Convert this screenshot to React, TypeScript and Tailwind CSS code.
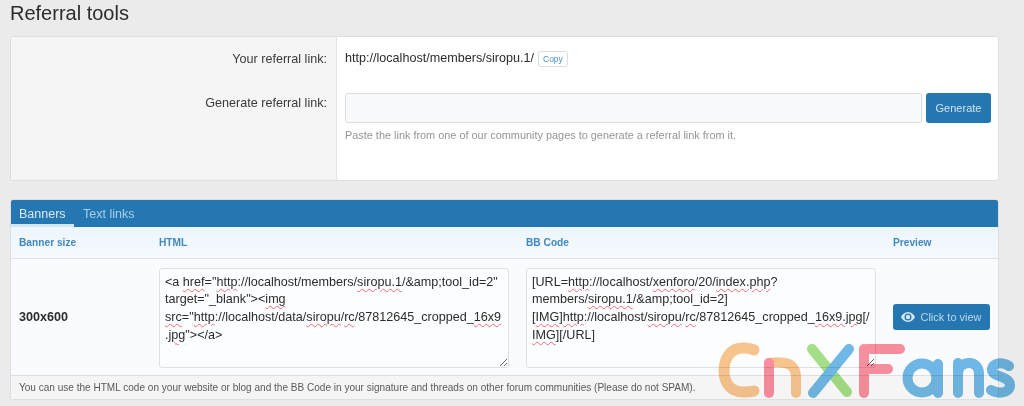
import React from 'react';

function Sq({ children }: { children: React.ReactNode }) {
  return <span className="underline decoration-wavy decoration-[#ee6a72] decoration-[1px] underline-offset-[2px]">{children}</span>;
}

function CnXFansLogo() {
  return (
    <svg className="absolute left-[700px] top-[330px] pointer-events-none" width="324" height="76" viewBox="0 0 324 76" fill="none" strokeLinecap="round" strokeLinejoin="round" strokeWidth="10">
      <g className="mix-blend-multiply">
        <path d="M54 20 C50 18 46 18 43 18 C30 18 24 29 24 41 C24 53 31 62 43 62 C47 62 51 62 54 61" stroke="#fac68e" strokeWidth="11" />
        <path d="M69 33 C74 32 80 32 85 33 C92 34 96 39 96 47 L96 63" stroke="#fac68e" />
        <path d="M69 33 L69 63" stroke="#fc8f9e" />
        <path d="M112 19 L147 62" stroke="#a6e086" />
        <path d="M149 19 L113 63" stroke="#70b9e6" />
        <path d="M164 19 L164 63" stroke="#fc8f9e" />
        <path d="M168 19 L200 19" stroke="#fc8f9e" />
        <path d="M164 39 L188 39" stroke="#fc8f9e" />
        <circle cx="222" cy="48" r="14.5" stroke="#70b9e6" />
        <path d="M238 34 L238 63" stroke="#70b9e6" />
        <path d="M258 33 L258 63 M258 44 C258 36 264 33 269 33 C275 33 279 37 279 44 L279 63" stroke="#70b9e6" />
        <path d="M309 36 C303 32 292 32 292 40 C292 47 310 46 310 55 C310 64 297 64 291 60" stroke="#70b9e6" />
      </g>
    </svg>
  );
}

export default function App() {
  return (
    <div className="relative h-[406px] overflow-hidden bg-[#ebebeb] px-[10px] font-['Liberation_Sans',Arial,sans-serif] text-[12.6px] text-[#2c2c2c]">
      <h1 className="h-[36px] pt-[1px] text-[20px] leading-[24px] text-[#2b2b2b]">Referral tools</h1>

      <div className="flex h-[145px] w-[989px] overflow-hidden rounded-[3px] border border-[#dfdfdf] bg-white">
        <div className="w-[326px] shrink-0 border-r border-[#e4e4e4] bg-[#f5f5f5] pr-[9px] text-right text-[#3a3a3a]">
          <div className="pt-[13px] leading-[18px]">Your referral link:</div>
          <div className="pt-[26px] leading-[18px]">Generate referral link:</div>
        </div>
        <div className="flex-1 pl-[8px]">
          <div className="flex h-[32px] items-center pt-[10px]">
            <span>http://localhost/members/siropu.1/</span>
            <span className="ml-[4px] mt-[2px] rounded-[3px] border border-[#dcdcdc] bg-white px-[4px] text-[8.5px] leading-[14px] text-[#4a8fc6]">Copy</span>
          </div>
          <div className="mt-[24px] flex h-[30px] gap-[4px]">
            <div className="w-[577px] rounded-[3px] border border-[#dddddd] bg-[#f7fafd]"></div>
            <div className="flex w-[65px] items-center justify-center rounded-[3px] bg-[#2577b1] text-[11px] text-[#cfe3f2]">Generate</div>
          </div>
          <div className="mt-[5px] text-[10.9px] leading-[14px] text-[#959595]">Paste the link from one of our community pages to generate a referral link from it.</div>
        </div>
      </div>

      <div className="mt-[18px] w-[989px] overflow-hidden rounded-[3px] border border-[#dfdfdf] bg-[#f9fbfe]">
        <div className="flex h-[27px] bg-[#2577b1] text-[12.5px]">
          <div className="w-[63px] border-b-[3px] border-[#d4e6f3] pl-[8px] pt-[5px] leading-[18px] text-[#d9e9f5]">Banners</div>
          <div className="pl-[9px] pt-[5px] leading-[18px] text-[#a9cde6]">Text links</div>
        </div>
        <div className="flex h-[32px] items-center border-b border-[#dde3e9] bg-gradient-to-b from-[#edf6fd] to-[#f5f9fd] text-[10.2px] font-bold text-[#3f88c2]">
          <div className="w-[148px] pl-[8px]">Banner size</div>
          <div className="w-[367px]">HTML</div>
          <div className="w-[367px]">BB Code</div>
          <div>Preview</div>
        </div>
        <div className="flex h-[116px] items-center bg-[#f9fbfe]">
          <div className="w-[148px] pl-[8px] text-[12.6px] font-bold text-[#2c2c2c]">300x600</div>
          <div className="w-[367px]">
            <div className="mt-[1px] h-[100px] w-[350px] resize overflow-hidden rounded-[3px] border border-[#e0e0e0] bg-[#fcfdff] px-[5px] pt-[5px] text-[12.6px] leading-[17.8px] whitespace-nowrap text-[#2c2c2c]">
              <div>&lt;a <Sq>href</Sq>="<Sq>http</Sq>://localhost/members/<Sq>siropu.1</Sq>/&amp;amp;tool_id=2"</div>
              <div>target="_blank"&gt;&lt;<Sq>img</Sq></div>
              <div><Sq>src</Sq>="<Sq>http</Sq>://localhost/data/<Sq>siropu</Sq>/<Sq>rc</Sq>/87812645_cropped_<Sq>16x9</Sq></div>
              <div>.<Sq>jpg</Sq>"&gt;&lt;/a&gt;</div>
            </div>
          </div>
          <div className="w-[367px]">
            <div className="mt-[1px] h-[100px] w-[350px] resize overflow-hidden rounded-[3px] border border-[#e0e0e0] bg-[#fcfdff] px-[5px] pt-[5px] text-[12.6px] leading-[17.8px] whitespace-nowrap text-[#2c2c2c]">
              <div>[URL=<Sq>http</Sq>://localhost/<Sq>xenforo</Sq>/20/<Sq>index.php</Sq>?</div>
              <div>members/<Sq>siropu.1</Sq>/&amp;amp;tool_id=2]</div>
              <div>[<Sq>IMG</Sq>]<Sq>http</Sq>://localhost/<Sq>siropu</Sq>/<Sq>rc</Sq>/87812645_cropped_<Sq>16x9.jpg</Sq>[/</div>
              <div><Sq>IMG</Sq>][/URL]</div>
            </div>
          </div>
          <div className="flex h-[26px] w-[97px] items-center justify-center gap-[5px] rounded-[3px] bg-[#2577b1] text-[11px] text-[#bcd8ec]">
            <svg width="14" height="10" viewBox="0 0 14 10" fill="#d7e7f3">
              <path fillRule="evenodd" d="M7 0C3.8 0 1.3 2.2 0 5c1.3 2.8 3.8 5 7 5s5.700-2.200 7-5C12.700 2.200 10.200 0 7 0Zm0 8.500A3.500 3.500 0 1 1 7 1.500a3.500 3.500 0 0 1 0 7Z" />
              <circle cx="7" cy="5" r="2.200" />
            </svg>
            <span>Click to view</span>
          </div>
        </div>
        <div className="flex h-[24px] items-center border-t border-[#dfdfdf] bg-[#f5f5f5] pl-[8px] text-[10.06px] text-[#5a5a5a]">
          You can use the HTML code on your website or blog and the BB Code in your signature and threads on other forum communities (Please do not SPAM).
        </div>
      </div>

      <CnXFansLogo />
    </div>
  );
}
